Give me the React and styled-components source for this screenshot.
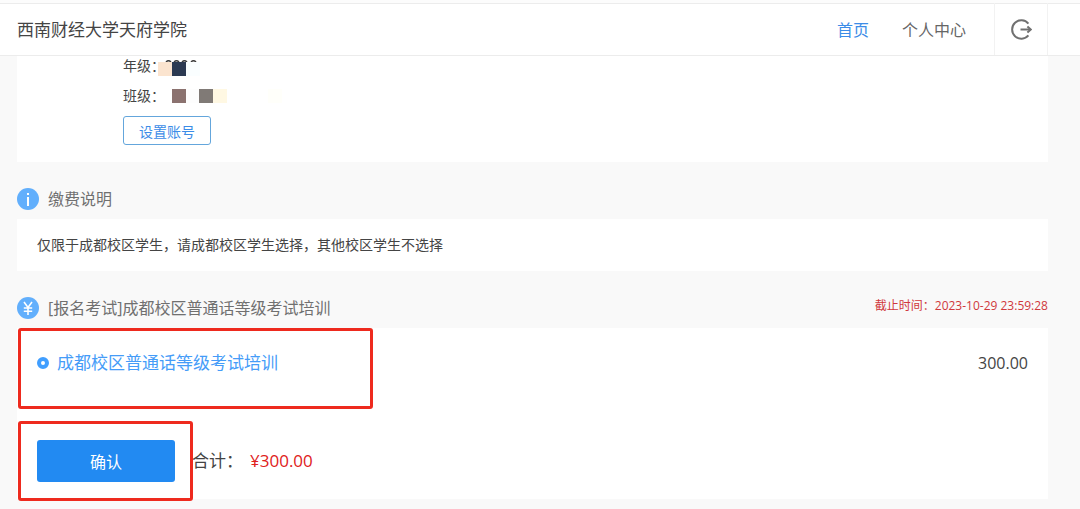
import React, { useState } from 'react';
import styled, { createGlobalStyle } from 'styled-components';

const GlobalStyle = createGlobalStyle`
    * {
        box-sizing: border-box;
    }
    body {
        margin: 0;
        background: #f9f9f9;
        color: #444;
        font-family: 'Open Sans', 'Noto Sans CJK SC', sans-serif;
        font-size: 14px;
        line-height: 20px;
    }
    button {
        font-family: inherit;
        cursor: pointer;
    }
`;

const GRADE_BLOCKS = [
    { x: 0, color: '#fbe4cf' },
    { x: 14, color: '#2c3a52' },
    { x: 28, color: '#fafeff' },
];

const CLASS_BLOCKS = [
    { x: 14, color: '#8b726f' },
    { x: 28, color: '#fdfdfd' },
    { x: 41, color: '#807a76' },
    { x: 55, color: '#fff8e3' },
    { x: 110, color: '#fffffa' },
];

const Mosaic = ({ blocks, marks }) => (
    <svg width="124" height="20" viewBox="0 0 124 20" aria-hidden="true">
        {marks && (
            <g fill="none" stroke="#3a3a3a" strokeWidth="1.5">
                <path d="M8 6Q10.5 3.6 13 6M16 6Q18.5 3.6 21 6M24 6Q26.5 3.6 29 6M33 6Q35.5 3.6 38 6" />
            </g>
        )}
        {blocks.map(({ x, color }) => (
            <rect key={x} x={x} y={marks ? 6 : 3} width="14" height="14" fill={color} />
        ))}
    </svg>
);

const LogoutIcon = () => (
    <svg width="22" height="22" viewBox="0 0 22 22" fill="none" stroke="#707070" strokeWidth="2">
        <path d="M18.4 5.6A9.2 9.2 0 1 0 18.4 17.4" />
        <path d="M10.5 11.5H20" />
        <path d="M17.4 8.4L20.8 11.5L17.4 14.6" />
    </svg>
);

const InfoIcon = () => (
    <svg width="22" height="22" viewBox="0 0 22 22">
        <circle cx="11" cy="11" r="11" fill="#62affc" />
        <rect x="10" y="5" width="2" height="2" fill="#fff" />
        <rect x="10" y="9" width="2" height="9" fill="#fff" />
    </svg>
);

const YuanIcon = () => (
    <svg width="22" height="22" viewBox="0 0 22 22">
        <circle cx="11" cy="11" r="11" fill="#62affc" />
        <path d="M7 5L11 10.5L15 5M11 10.5V18M6.8 11H15.2M6.8 14.2H15.2" fill="none" stroke="#fff" strokeWidth="1.6" />
    </svg>
);

const App = () => {
    const [selected, setSelected] = useState('putonghua');

    return (
        <>
            <GlobalStyle />
            <S.Header>
                <S.School>西南财经大学天府学院</S.School>
                <S.Nav>
                    <S.NavLink href="#home" $active>
                        首页
                    </S.NavLink>
                    <S.NavLink href="#me">个人中心</S.NavLink>
                </S.Nav>
                <S.Logout type="button" aria-label="退出">
                    <LogoutIcon />
                </S.Logout>
            </S.Header>

            <S.Main>
                <S.Profile>
                    <S.Field>
                        年级：
                        <Mosaic blocks={GRADE_BLOCKS} marks />
                    </S.Field>
                    <S.Field>
                        班级：
                        <Mosaic blocks={CLASS_BLOCKS} />
                    </S.Field>
                    <S.SetAccount type="button">设置账号</S.SetAccount>
                </S.Profile>

                <S.SectionHead>
                    <InfoIcon />
                    <S.SectionTitle>缴费说明</S.SectionTitle>
                </S.SectionHead>
                <S.Notice>仅限于成都校区学生，请成都校区学生选择，其他校区学生不选择</S.Notice>

                <S.SectionHead>
                    <YuanIcon />
                    <S.SectionTitle>[报名考试]成都校区普通话等级考试培训</S.SectionTitle>
                    <S.Deadline>截止时间：2023-10-29 23:59:28</S.Deadline>
                </S.SectionHead>
                <S.Order>
                    <S.Item>
                        <S.Option>
                            <S.Radio
                                type="radio"
                                name="item"
                                checked={selected === 'putonghua'}
                                onChange={() => setSelected('putonghua')}
                            />
                            成都校区普通话等级考试培训
                        </S.Option>
                        <S.Price>300.00</S.Price>
                        <S.ItemMark />
                    </S.Item>
                    <S.Submit>
                        <S.Confirm type="button">确认</S.Confirm>
                        <S.Total>
                            合计：<S.Amount>¥300.00</S.Amount>
                        </S.Total>
                        <S.SubmitMark />
                    </S.Submit>
                </S.Order>
            </S.Main>
        </>
    );
};

const Card = styled.section`
    background: #fff;
`;

// red frame laid over the part to look at
const Mark = styled.div`
    position: absolute;
    border: 3px solid #ee2a1e;
    border-radius: 3px;
    pointer-events: none;
`;

const S = {
    Header: styled.header`
        display: flex;
        height: 56px;
        padding: 0 32px 0 17px;
        background: #fff;
        border-top: 3px solid #fcfcfc;
        border-bottom: 1px solid #ececec;
        box-shadow: inset 0 1px 0 #ececec;
    `,
    School: styled.h1`
        flex: 1;
        margin: 0;
        font-size: 17px;
        font-weight: 400;
        line-height: 54px;
    `,
    Nav: styled.nav`
        display: flex;
        gap: 33px;
        padding-right: 28px;
    `,
    NavLink: styled.a`
        color: ${({ $active }) => ($active ? '#3c8ce7' : '#666')};
        font-size: 16px;
        line-height: 54px;
        text-decoration: none;
    `,
    Logout: styled.button`
        display: flex;
        justify-content: center;
        align-items: center;
        width: 54px;
        padding: 0;
        background: none;
        border: solid #f2f2f2;
        border-width: 0 1px;
    `,
    Main: styled.main`
        padding: 0 32px 9px 17px;
    `,
    Profile: styled(Card)`
        display: flex;
        flex-direction: column;
        align-items: flex-start;
        gap: 10px;
        padding: 0 20px 17px 106px;
    `,
    Field: styled.div`
        display: flex;
        height: 20px;
        & > svg {
            margin-left: -7px;
        }
    `,
    SetAccount: styled.button`
        height: 29px;
        padding: 0 15px;
        background: #fff;
        border: 1px solid #64a6dc;
        border-radius: 3px;
        color: #3c8ce7;
        font-size: 14px;
    `,
    SectionHead: styled.div`
        display: flex;
        gap: 9px;
        padding: 26px 0 9px;
    `,
    SectionTitle: styled.h2`
        flex: 1;
        margin: 0;
        color: #707070;
        font-size: 16px;
        font-weight: 400;
        line-height: 22px;
    `,
    Deadline: styled.span`
        color: #d0383c;
        font-size: 12px;
        line-height: 18px;
    `,
    Notice: styled(Card)`
        padding: 16px 20px;
    `,
    Order: styled(Card)`
        padding: 20px 20px 17px;
    `,
    Item: styled.div`
        position: relative;
        display: flex;
        justify-content: space-between;
        margin-bottom: 62px;
        line-height: 30px;
    `,
    Option: styled.label`
        display: flex;
        align-items: center;
        gap: 8px;
        color: #459cf8;
        font-size: 17px;
    `,
    Radio: styled.input`
        appearance: none;
        width: 12px;
        height: 12px;
        margin: 0;
        border: 1px solid #bbb;
        border-radius: 50%;
        &:checked {
            border: 4px solid #409eff;
        }
    `,
    Price: styled.span`
        font-size: 16px;
    `,
    ItemMark: styled(Mark)`
        top: -20px;
        left: -19px;
        width: 355px;
        height: 81px;
    `,
    Submit: styled.div`
        position: relative;
        display: flex;
        align-items: center;
        gap: 17px;
    `,
    Confirm: styled.button`
        width: 138px;
        height: 42px;
        background: #228af2;
        border: 0;
        border-radius: 3px;
        color: #fff;
        font-size: 16px;
    `,
    Total: styled.span`
        font-size: 17px;
        line-height: 30px;
    `,
    Amount: styled.strong`
        margin-left: 7px;
        color: #e02020;
        font-weight: 400;
    `,
    SubmitMark: styled(Mark)`
        top: -19px;
        left: -19px;
        width: 175px;
        height: 80px;
    `,
};

export default App;
